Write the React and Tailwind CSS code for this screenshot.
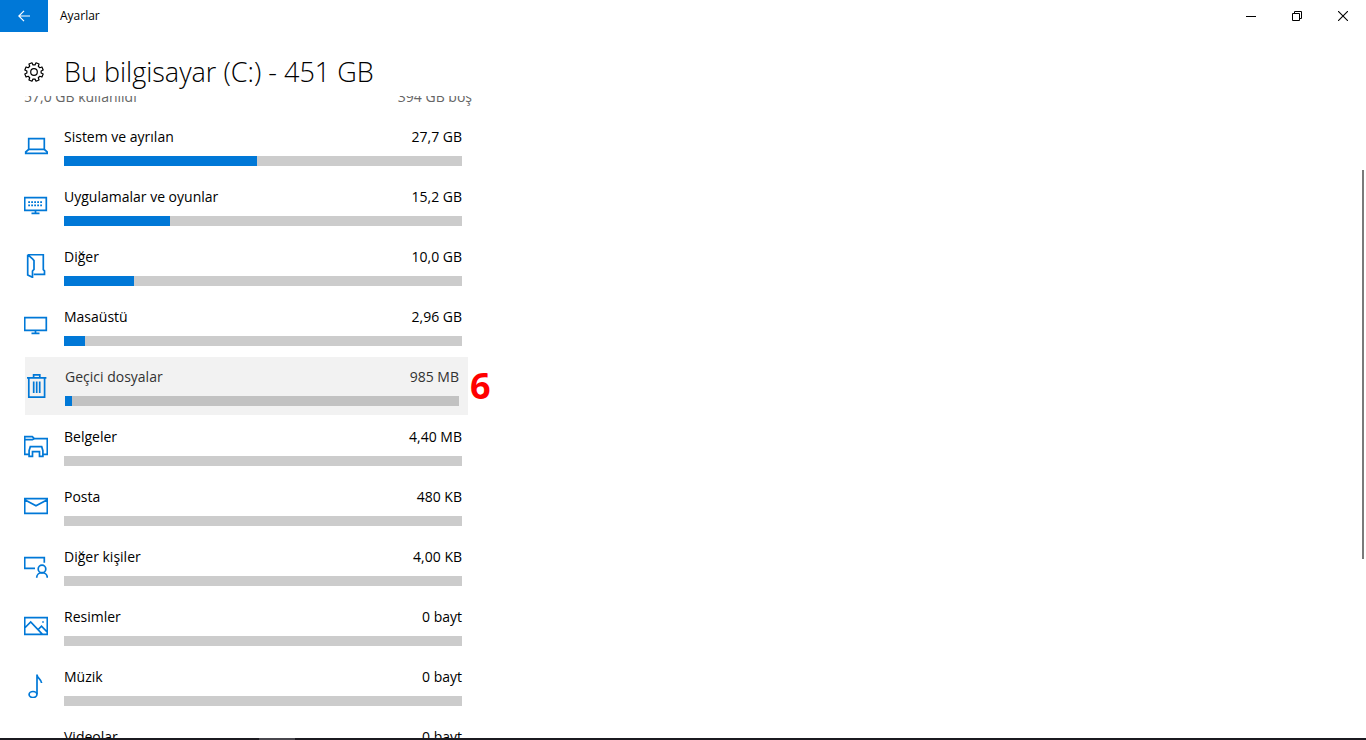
import React from 'react';

const icons = {
  system: (
    <>
      <path d="M4.7 4.7h15.6v10.6H4.7z" />
      <path d="M4.7 15.3L1.7 18v1.3h21.6V18l-3-2.7" />
    </>
  ),
  apps: (
    <>
      <path d="M.7 3.7h21.6v12.6H.7zM11.5 16.3v2.9M7.5 19.3h8" />
      <path strokeWidth="1.8" strokeDasharray="1.8 1.2" d="M4.2 8.2h14.6M4.2 11.4h14.6" />
    </>
  ),
  other: (
    <path d="M3.7.7h15.6v15l1.2 1.2v3.4H9.8M3.7.7v20.2l4.8 2.4V17l1.5-1.6V6.6L8.5 4.8 3.7.7" />
  ),
  desktop: <path d="M.7 3.7h21.6v12.6H.7zM11.5 16.3v2.9M7.5 19.3h8" />,
  temp: (
    <>
      <path d="M2 3.8h19.4M8.6 3.8V.8h6.2v3" />
      <path d="M3.8 3.8v19.4h15.8V3.8M8.7 7.5v11.6M11.7 7.5v11.6M14.7 7.5v11.6" />
    </>
  ),
  documents: (
    <>
      <path d="M5 20.3H.7V2.7h7.6l2 2h13v15.6H19M.7 5.7h7.6l2-1" />
      <path d="M6.3 12.7h11.4l1.2 4v5.6h-3.4v-4.6H8.5v4.6H5.1v-5.6z" />
    </>
  ),
  mail: (
    <path d="M.7 4.7h22.6v14.6H.7zM.7 5.7l11.3 6 11.3-6" />
  ),
  people: (
    <>
      <path d="M11 14.3H.7V3.7h19.6v5" />
      <circle cx="18" cy="15" r="3.8" />
      <path d="M12.7 23.7c0-3 2.3-5 5.3-5s5.3 2 5.3 5" />
    </>
  ),
  pictures: (
    <>
      <path d="M.7 3.7h22.6v16.6H.7zM.7 14l6-6 11.8 12.3M14.2 15.5l3.3-3.3 5.8 6" />
      <path d="M18.2 8h1.6" />
    </>
  ),
  music: (
    <>
      <path d="M13 20.2V.5c0 4 4.3 4 4.6 8.5" />
      <ellipse cx="9" cy="20.5" rx="3.9" ry="3" />
    </>
  ),
  videos: <path d="M.7 6.7h16.6v10.6H.7zM17.3 10.5l6-3v9l-6-3" />,
};

const items = [
  { name: 'Sistem ve ayrılan', size: '27,7 GB', percent: 48.5, icon: 'system' },
  { name: 'Uygulamalar ve oyunlar', size: '15,2 GB', percent: 26.6, icon: 'apps' },
  { name: 'Diğer', size: '10,0 GB', percent: 17.6, icon: 'other' },
  { name: 'Masaüstü', size: '2,96 GB', percent: 5.3, icon: 'desktop' },
  { name: 'Geçici dosyalar', size: '985 MB', percent: 1.8, icon: 'temp', active: true },
  { name: 'Belgeler', size: '4,40 MB', percent: 0, icon: 'documents' },
  { name: 'Posta', size: '480 KB', percent: 0, icon: 'mail' },
  { name: 'Diğer kişiler', size: '4,00 KB', percent: 0, icon: 'people' },
  { name: 'Resimler', size: '0 bayt', percent: 0, icon: 'pictures' },
  { name: 'Müzik', size: '0 bayt', percent: 0, icon: 'music' },
  { name: 'Videolar', size: '0 bayt', percent: 0, icon: 'videos' },
];

// Outline of the gear, 8 teeth around the center
const gearPath = () => {
  const points = [];
  for (let i = 0; i < 8; i++) {
    const middle = i * 45 + 22.5;
    [[-14, 7.2], [-10, 9.4], [10, 9.4], [14, 7.2]].forEach(([offset, radius]) => {
      const angle = ((middle + offset) * Math.PI) / 180;
      points.push((10 + radius * Math.cos(angle)).toFixed(2) + ' ' + (10 + radius * Math.sin(angle)).toFixed(2));
    });
  }
  return 'M' + points.join('L') + 'Z';
};

function TitleBar() {
  return (
    <div className="flex h-8 shrink-0 items-center">
      <button type="button" aria-label="Geri" className="flex h-8 w-12 items-center justify-center bg-[#0078d7] text-white">
        <svg viewBox="0 0 12 12" className="h-3 w-3" fill="none" stroke="currentColor" strokeWidth="1.2">
          <path d="M12 6H.8M6 .8L.8 6 6 11.2" />
        </svg>
      </button>
      <span className="flex-1 pl-3 text-xs">Ayarlar</span>
      <button type="button" aria-label="Simge durumuna küçült" className="flex h-8 w-[46px] items-center justify-center">
        <svg viewBox="0 0 10 10" className="h-2.5 w-2.5" fill="none" stroke="currentColor">
          <path d="M0 5.5h10" />
        </svg>
      </button>
      <button type="button" aria-label="Önceki boyut" className="flex h-8 w-[46px] items-center justify-center">
        <svg viewBox="0 0 10 10" className="h-2.5 w-2.5" fill="none" stroke="currentColor">
          <path d="M.5 2.5h7v7h-7zM2.5 2.5v-2h7v7h-2" />
        </svg>
      </button>
      <button type="button" aria-label="Kapat" className="flex h-8 w-[46px] items-center justify-center">
        <svg viewBox="0 0 10 10" className="h-2.5 w-2.5" fill="none" stroke="currentColor" strokeWidth="1.1">
          <path d="M0 0l10 10M10 0L0 10" />
        </svg>
      </button>
    </div>
  );
}

function StorageRow({ item }) {
  return (
    <li className="relative flex h-[60px] flex-col justify-center">
      <a
        href="#"
        className={
          item.active
            ? 'ml-px mr-1 flex h-[58px] items-center gap-4 bg-[#f2f2f2] pr-[9px] text-[#333333]'
            : 'flex h-[60px] items-center gap-4 pr-2.5'
        }
      >
        <svg viewBox="0 0 24 24" className="h-6 w-6 shrink-0 text-[#0078d7]" fill="none" stroke="currentColor" strokeWidth="1.7">
          {icons[item.icon]}
        </svg>
        <div className="flex-1">
          <div className="flex justify-between leading-5">
            <span>{item.name}</span>
            <span>{item.size}</span>
          </div>
          <div
            role="progressbar"
            aria-label={item.name}
            aria-valuenow={item.percent}
            className={item.active ? 'mt-[9px] h-2.5 bg-[#c2c2c2]' : 'mt-[9px] h-2.5 bg-[#cccccc]'}
          >
            <div className="h-full bg-[#0078d7]" style={{ width: item.percent + '%' }} />
          </div>
        </div>
      </a>
      {item.active && (
        <span className="absolute left-full top-1/2 -ml-0.5 -translate-y-1/2 text-4xl font-bold leading-none text-[#ff0000]">6</span>
      )}
    </li>
  );
}

function App() {
  return (
    <div className="flex h-screen flex-col overflow-hidden bg-white font-['Open_Sans','Noto_Sans',sans-serif] text-sm text-black">
      <TitleBar />
      <header className="flex h-16 shrink-0 items-center gap-5 px-6 pt-4">
        <svg viewBox="0 0 20 20" className="h-5 w-5" fill="none" stroke="currentColor" strokeWidth="1.2" strokeLinejoin="round">
          <path d={gearPath()} />
          <circle cx="10" cy="10" r="3.3" />
        </svg>
        <h1 className="text-[27px] font-light leading-8">Bu bilgisayar (C:) - 451 GB</h1>
      </header>
      <main className="flex min-h-0 flex-1 justify-between overflow-hidden">
        <div className="-mt-[9px] ml-6 w-full max-w-[448px]">
          <div className="mb-[9px] flex justify-between leading-5 text-[#666666]">
            <span>57,0 GB kullanıldı</span>
            <span>394 GB boş</span>
          </div>
          <ul>
            {items.map((item) => (
              <StorageRow key={item.name} item={item} />
            ))}
          </ul>
        </div>
        {/* Scroll thumb */}
        <div className="mr-0.5 mt-[74px] h-[389px] w-0.5 bg-[#7a7a7a]" />
      </main>
      {/* Taskbar edge */}
      <div className="flex h-0.5 shrink-0 bg-[#1b1a20]">
        <div className="ml-[259px] w-9 bg-[#48474d]" />
      </div>
    </div>
  );
}

export default App;
